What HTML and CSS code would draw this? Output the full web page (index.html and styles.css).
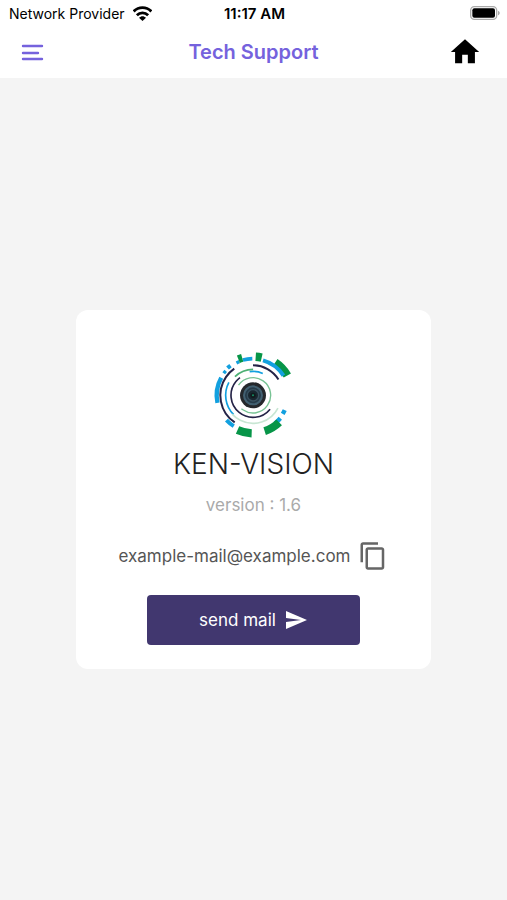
FILE: index.html
```html
<!DOCTYPE html>
<html lang="en">
<head>
<meta charset="utf-8">
<meta name="viewport" content="width=device-width, initial-scale=1">
<title>Tech Support</title>
<link rel="stylesheet" href="styles.css">
</head>
<body>
<div class="status">
  <div class="carrier">
    <span>Network Provider</span>
    <svg class="wifi" viewBox="0 0 54 42" aria-hidden="true">
      <g fill="none" stroke="#000" stroke-width="8">
        <path d="M2 15C16 1 38 1 52 15"/>
        <path d="M11 26C20 17 34 17 43 26"/>
      </g>
      <path d="M17 33C23 27 31 27 37 33L27 42Z"/>
    </svg>
  </div>
  <time class="clock">11:17 AM</time>
  <svg class="battery" viewBox="0 0 90 42" aria-hidden="true">
    <rect x="2" y="2" width="78" height="38" rx="11" fill="#fff" stroke="#aaa" stroke-width="4"/>
    <rect x="7" y="7" width="68" height="28" rx="6"/>
    <path d="M84 14C91 17 91 25 84 28Z" fill="#aaa"/>
  </svg>
</div>
<header class="bar">
  <button class="icon-button" type="button" aria-label="Menu">
    <svg class="menu-icon" viewBox="0 0 23 17" aria-hidden="true">
      <path d="M2 2H21M2 9H17M2 15H21" fill="none" stroke="#7562dd" stroke-width="2.400" stroke-linecap="round"/>
    </svg>
  </button>
  <h1 class="title">Tech Support</h1>
  <a class="home" href="#" aria-label="Home">
    <svg class="home-icon" viewBox="0 0 24 24" aria-hidden="true"><path d="M10 20v-6h4v6h5v-8h3L12 3 2 12h3v8z"/></svg>
  </a>
</header>
<main class="page">
  <section class="card">
    <svg class="logo" viewBox="0 0 288 300" aria-hidden="true">
      <g fill="none" transform="translate(144 154)">
        <g stroke="#12a0df">
          <circle r="82" pathLength="360" stroke-width="5" stroke-dasharray="73 287" transform="rotate(135)"/>
          <circle r="72" pathLength="360" stroke-width="5" stroke-dasharray="32 328" transform="rotate(262)"/>
          <circle r="109" pathLength="360" stroke-width="13" stroke-dasharray="41 319" transform="rotate(168)"/>
          <circle r="109" pathLength="360" stroke-width="12" stroke-dasharray="15 345" transform="rotate(122)"/>
          <circle r="110" pathLength="360" stroke-width="10" stroke-dasharray="5 355" transform="rotate(217)"/>
          <circle r="112" pathLength="360" stroke-width="12" stroke-dasharray="6 354" transform="rotate(227)"/>
          <circle r="109" pathLength="360" stroke-width="10" stroke-dasharray="5 355" transform="rotate(243)"/>
          <circle r="110" pathLength="360" stroke-width="11" stroke-dasharray="15 345" transform="rotate(254)"/>
          <circle r="105" pathLength="360" stroke-width="13" stroke-dasharray="7 353" transform="rotate(25)"/>
          <circle r="107" pathLength="360" stroke-width="13" stroke-dasharray="12 348" transform="rotate(40)"/>
        </g>
        <g stroke="#079548">
          <circle r="117" pathLength="360" stroke-width="24" stroke-dasharray="6 354" transform="rotate(248)"/>
          <circle r="116" pathLength="360" stroke-width="25" stroke-dasharray="9 351" transform="rotate(274)"/>
          <circle r="119" pathLength="360" stroke-width="25" stroke-dasharray="26 334" transform="rotate(304)"/>
          <circle r="113" pathLength="360" stroke-width="24" stroke-dasharray="26 334" transform="rotate(46)"/>
          <circle r="114" pathLength="360" stroke-width="25" stroke-dasharray="22 338" transform="rotate(92)"/>
        </g>
        <circle r="109" pathLength="360" stroke="#12a0df" stroke-width="12" stroke-dasharray="41 319" transform="rotate(286)"/>
        <g stroke="#242347">
          <circle r="90" pathLength="360" stroke-width="6" stroke-dasharray="58 302" transform="rotate(270)"/>
          <circle r="98" pathLength="360" stroke-width="6" stroke-dasharray="111 249" transform="rotate(124)"/>
          <circle r="66" pathLength="360" stroke-width="5" stroke-dasharray="194 166" transform="rotate(39)"/>
        </g>
        <circle r="84" pathLength="360" stroke="#c8e6d3" stroke-width="5" stroke-dasharray="111 249" transform="rotate(27)"/>
        <circle r="78" pathLength="360" stroke="#4cb073" stroke-width="5" stroke-dasharray="44 316" transform="rotate(226)"/>
        <circle r="53" pathLength="360" stroke="#78c394" stroke-width="4" stroke-dasharray="275 85" transform="rotate(215)"/>
        <circle r="39" fill="#25282c"/>
        <circle r="27" fill="#263b49" stroke="#426071" stroke-width="6"/>
        <circle r="17" fill="#19262f" stroke="#39515f" stroke-width="4"/>
        <circle r="8" fill="#101b1d"/>
        <circle r="3" fill="#178d65"/>
      </g>
    </svg>
    <h2 class="brand">KEN-VISION</h2>
    <p class="version">version : 1.6</p>
    <div class="mail">
      <span>example-mail@example.com</span>
      <button class="icon-button" type="button" aria-label="Copy address">
        <svg class="copy-icon" viewBox="0 0 24 24" aria-hidden="true"><path fill="#666" d="M16 1H4c-1.100 0-2 .9-2 2v14h2V3h12V1zm3 4H8c-1.100 0-2 .9-2 2v14c0 1.100.9 2 2 2h11c1.100 0 2-.9 2-2V7c0-1.100-.9-2-2-2zm0 16H8V7h11v14z"/></svg>
      </button>
    </div>
    <button class="send" type="button">
      <span>send mail</span>
      <svg class="send-icon" viewBox="0 0 24 24" aria-hidden="true"><path fill="#fff" d="M2 21L23 12 2 3v7l15 2-15 2z"/></svg>
    </button>
  </section>
</main>
</body>
</html>
```
FILE: styles.css
```css
* {
  box-sizing: border-box;
}

body {
  margin: 0;
  min-height: 100vh;
  display: flex;
  flex-direction: column;
  background: #f4f4f4;
  color: #000;
  font-family: Inter, "Liberation Sans", sans-serif;
}

h1,
h2,
p {
  margin: 0;
}

svg {
  display: block;
}

button {
  border: 0;
  font: inherit;
  cursor: pointer;
}

.status {
  display: grid;
  grid-template-columns: 1fr auto 1fr;
  align-items: center;
  height: 26px;
  padding: 0 7px 0 9px;
  background: #fff;
  font-size: 14px;
}

.carrier {
  display: flex;
  align-items: center;
  gap: 8px;
  white-space: nowrap;
}

.wifi {
  width: 19px;
  height: 15px;
}

.clock {
  font-size: 15px;
  font-weight: 600;
}

.battery {
  justify-self: end;
  width: 30px;
  height: 14px;
}

.bar {
  display: grid;
  grid-template-columns: 1fr auto 1fr;
  align-items: center;
  height: 52px;
  padding: 0 21px;
  background: #fff;
}

.icon-button {
  justify-self: start;
  padding: 0;
  background: none;
}

.menu-icon {
  width: 23px;
  height: 17px;
}

.title {
  color: #7562dd;
  font-size: 20px;
  font-weight: 600;
}

.home {
  justify-self: end;
  margin-right: 4px;
}

.home-icon {
  width: 34px;
  height: 34px;
}

.page {
  flex: 1;
  display: flex;
  align-items: center;
  justify-content: center;
}

.card {
  width: 70%;
  display: flex;
  flex-direction: column;
  align-items: center;
  padding: 34px 16px 24px;
  border-radius: 12px;
  background: #fff;
}

.logo {
  width: 96px;
  height: 100px;
}

.brand {
  margin-top: 3px;
  color: #222;
  font-size: 28px;
  font-weight: 300;
  line-height: 34px;
}

.version {
  margin-top: 12px;
  color: #aaa;
  font-size: 17px;
  line-height: 24px;
}

.mail {
  display: flex;
  align-items: center;
  gap: 8px;
  margin-top: 24px;
  color: #555;
  font-size: 17px;
}

.copy-icon {
  width: 30px;
  height: 30px;
}

.send {
  display: flex;
  align-items: center;
  justify-content: center;
  gap: 8px;
  width: 66%;
  height: 50px;
  margin-top: 24px;
  border-radius: 4px;
  background: #41376f;
  color: #fff;
  font-size: 17px;
}

.send-icon {
  width: 24px;
  height: 24px;
}
```
